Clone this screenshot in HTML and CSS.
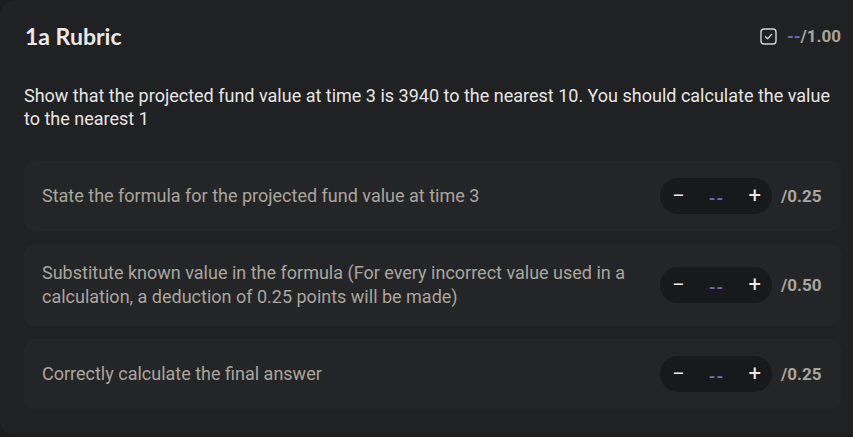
FILE: index.html
```html
<!DOCTYPE html>
<html lang="en">
<head>
<meta charset="utf-8">
<link rel="stylesheet" href="styles.css">
</head>
<body>
<div class="card">
  <div class="header">
    <h1 class="title">1a Rubric</h1>
    <div class="total">
      <svg class="check" width="17" height="17" viewBox="0 0 17 17" fill="none">
        <rect x="1" y="1" width="15" height="15" rx="3" stroke="#d8d5d0" stroke-width="1.4"/>
        <path d="M5.5 8.8 L7.6 10.8 L11.6 6.4" stroke="#d8d5d0" stroke-width="1.4" stroke-linecap="round" stroke-linejoin="round"/>
      </svg>
      <span class="score"><span class="dash">--</span>/1.00</span>
    </div>
  </div>
  <p class="question">Show that the projected fund value at time 3 is 3940 to the nearest 10. You should calculate the value to the nearest 1</p>
  <div class="rows">
    <div class="row">
      <div class="text">State the formula for the projected fund value at time 3</div>
      <div class="stepper"><span class="btn">−</span><span class="dash">--</span><span class="btn">+</span></div>
      <div class="max">/0.25</div>
    </div>
    <div class="row">
      <div class="text">Substitute known value in the formula (For every incorrect value used in a calculation, a deduction of 0.25 points will be made)</div>
      <div class="stepper"><span class="btn">−</span><span class="dash">--</span><span class="btn">+</span></div>
      <div class="max">/0.50</div>
    </div>
    <div class="row">
      <div class="text">Correctly calculate the final answer</div>
      <div class="stepper"><span class="btn">−</span><span class="dash">--</span><span class="btn">+</span></div>
      <div class="max">/0.25</div>
    </div>
  </div>
</div>
</body>
</html>
```

FILE: styles.css
```css
html, body {
  margin: 0;
  padding: 0;
  background: #1a1c1e;
  overflow: hidden;
  width: 853px;
  height: 437px;
}
body {
  font-family: Roboto, "Liberation Sans", sans-serif;
  color: #e8e6e3;
}
.card {
  background: #1f2123;
  border-radius: 14px;
  margin-right: -14px;
  padding: 24px 26px 26px 24px;
  height: 435px;
  box-sizing: border-box;
}
.header {
  display: flex;
  align-items: center;
  justify-content: space-between;
  height: 24px;
}
.title {
  margin: 0 0 0 1px;
  font-family: Lato, "Noto Sans", sans-serif;
  font-weight: 700;
  font-size: 23px;
  line-height: 24px;
  color: #ebe9e6;
}
.total {
  display: flex;
  align-items: center;
  gap: 10px;
}
.check { display: block; }
.score {
  font-weight: 700;
  font-size: 17px;
  color: #aaa59d;
}
.dash {
  color: #7565c0;
  font-weight: 700;
}
.question {
  margin: 36px 0 31px;
  font-size: 18px;
  line-height: 23px;
  color: #e8e6e3;
}
.rows {
  display: flex;
  flex-direction: column;
  gap: 13px;
}
.row {
  display: flex;
  align-items: center;
  background: #242527;
  border-radius: 10px;
  padding: 17px 18px 17px 18px;
}
.text {
  flex: 1;
  font-size: 18px;
  line-height: 24px;
  color: #aaa59d;
  padding-right: 24px;
}
.stepper {
  display: flex;
  align-items: center;
  justify-content: space-between;
  width: 112px;
  height: 36px;
  box-sizing: border-box;
  padding: 0 11px 0 12px;
  background: #18191a;
  border-radius: 18px;
}
.stepper .btn {
  color: #ecebe8;
  font-size: 22px;
  font-weight: 400;
  line-height: 1;
}
.stepper .dash {
  font-size: 17px;
  letter-spacing: 1px;
  padding-top: 3px;
}
.max {
  margin-left: 9px;
  font-weight: 700;
  font-size: 17px;
  color: #aaa59d;
  width: 42px;
}
```
